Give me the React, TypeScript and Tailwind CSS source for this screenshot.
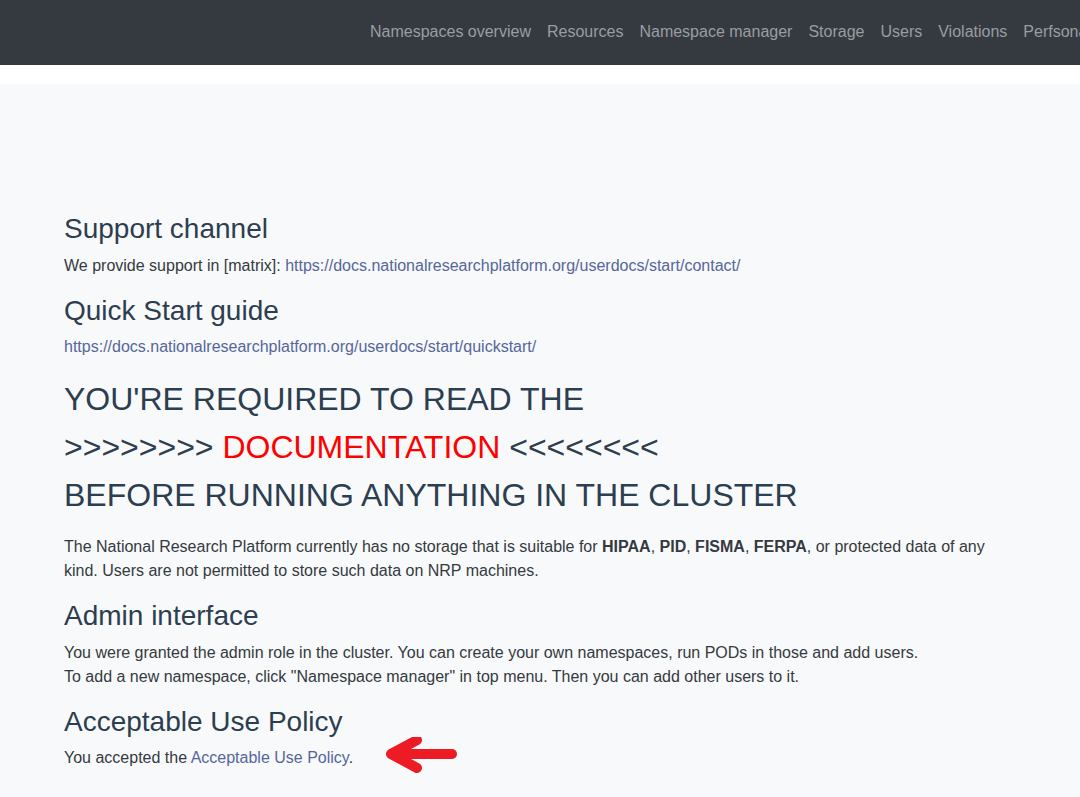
import React from "react";

const navItems = [
  "Namespaces overview",
  "Resources",
  "Namespace manager",
  "Storage",
  "Users",
  "Violations",
  "Perfsonar",
  "Logout",
];

export default function App() {
  return (
    <div className="min-h-[797px] bg-[#f8f9fa] font-['Liberation_Sans',Arial,sans-serif] text-[#343a40]">
      {/* Top navbar */}
      <nav className="h-[65px] bg-[#343a40] flex items-center overflow-hidden">
        <ul className="flex pl-[362px] pb-[2px] whitespace-nowrap">
          {navItems.map((item) => (
            <li key={item} className="px-2 text-base text-[#9a9da1]">
              {item}
            </li>
          ))}
        </ul>
      </nav>
      <div className="h-[19px] bg-white" />

      {/* Content */}
      <main className="relative pl-[64px] pt-[128px] pb-6">
        <h3 className="text-[28px] leading-[1.2] mb-2 text-[#2c3e50]">Support channel</h3>
        <p className="text-base leading-6 mb-4">
          We provide support in [matrix]:{" "}
          <a className="text-[#56669a]">https://docs.nationalresearchplatform.org/userdocs/start/contact/</a>
        </p>

        <h3 className="text-[28px] leading-[1.2] mb-2 text-[#2c3e50]">Quick Start guide</h3>
        <p className="text-base leading-6 mb-4">
          <a className="text-[#56669a]">https://docs.nationalresearchplatform.org/userdocs/start/quickstart/</a>
        </p>

        <div className="text-[32px] leading-[48px] mb-4 text-[#2c3e50]">
          <div>YOU'RE REQUIRED TO READ THE</div>
          <div>
            &gt;&gt;&gt;&gt;&gt;&gt;&gt;&gt; <span className="text-[#ff0000]">DOCUMENTATION</span>{" "}
            &lt;&lt;&lt;&lt;&lt;&lt;&lt;&lt;
          </div>
          <div>BEFORE RUNNING ANYTHING IN THE CLUSTER</div>
        </div>

        <p className="text-base leading-6 mb-4 max-w-[930px]">
          The National Research Platform currently has no storage that is suitable for <b>HIPAA</b>,{" "}
          <b>PID</b>, <b>FISMA</b>, <b>FERPA</b>, or protected data of any kind. Users are not permitted
          to store such data on NRP machines.
        </p>

        <h3 className="text-[28px] leading-[1.2] mb-2 text-[#2c3e50]">Admin interface</h3>
        <p className="text-base leading-6 mb-4">
          You were granted the admin role in the cluster. You can create your own namespaces, run PODs in
          those and add users.
          <br />
          To add a new namespace, click "Namespace manager" in top menu. Then you can add other users to it.
        </p>

        <h3 className="text-[28px] leading-[1.2] mb-2 text-[#2c3e50]">Acceptable Use Policy</h3>
        <p className="text-base leading-6">
          You accepted the <a className="text-[#56669a]">Acceptable Use Policy</a>.
        </p>

        {/* Red arrow annotation */}
        <svg
          className="absolute left-[383px] top-[653px]"
          width="80"
          height="40"
          viewBox="0 0 80 40"
        >
          <g stroke="#ed1c24" strokeWidth="10" strokeLinecap="round" strokeLinejoin="round" fill="none">
            <line x1="9" y1="17" x2="69" y2="17" />
            <polyline points="34,3 8,17 34,31" />
          </g>
        </svg>
      </main>
    </div>
  );
}
